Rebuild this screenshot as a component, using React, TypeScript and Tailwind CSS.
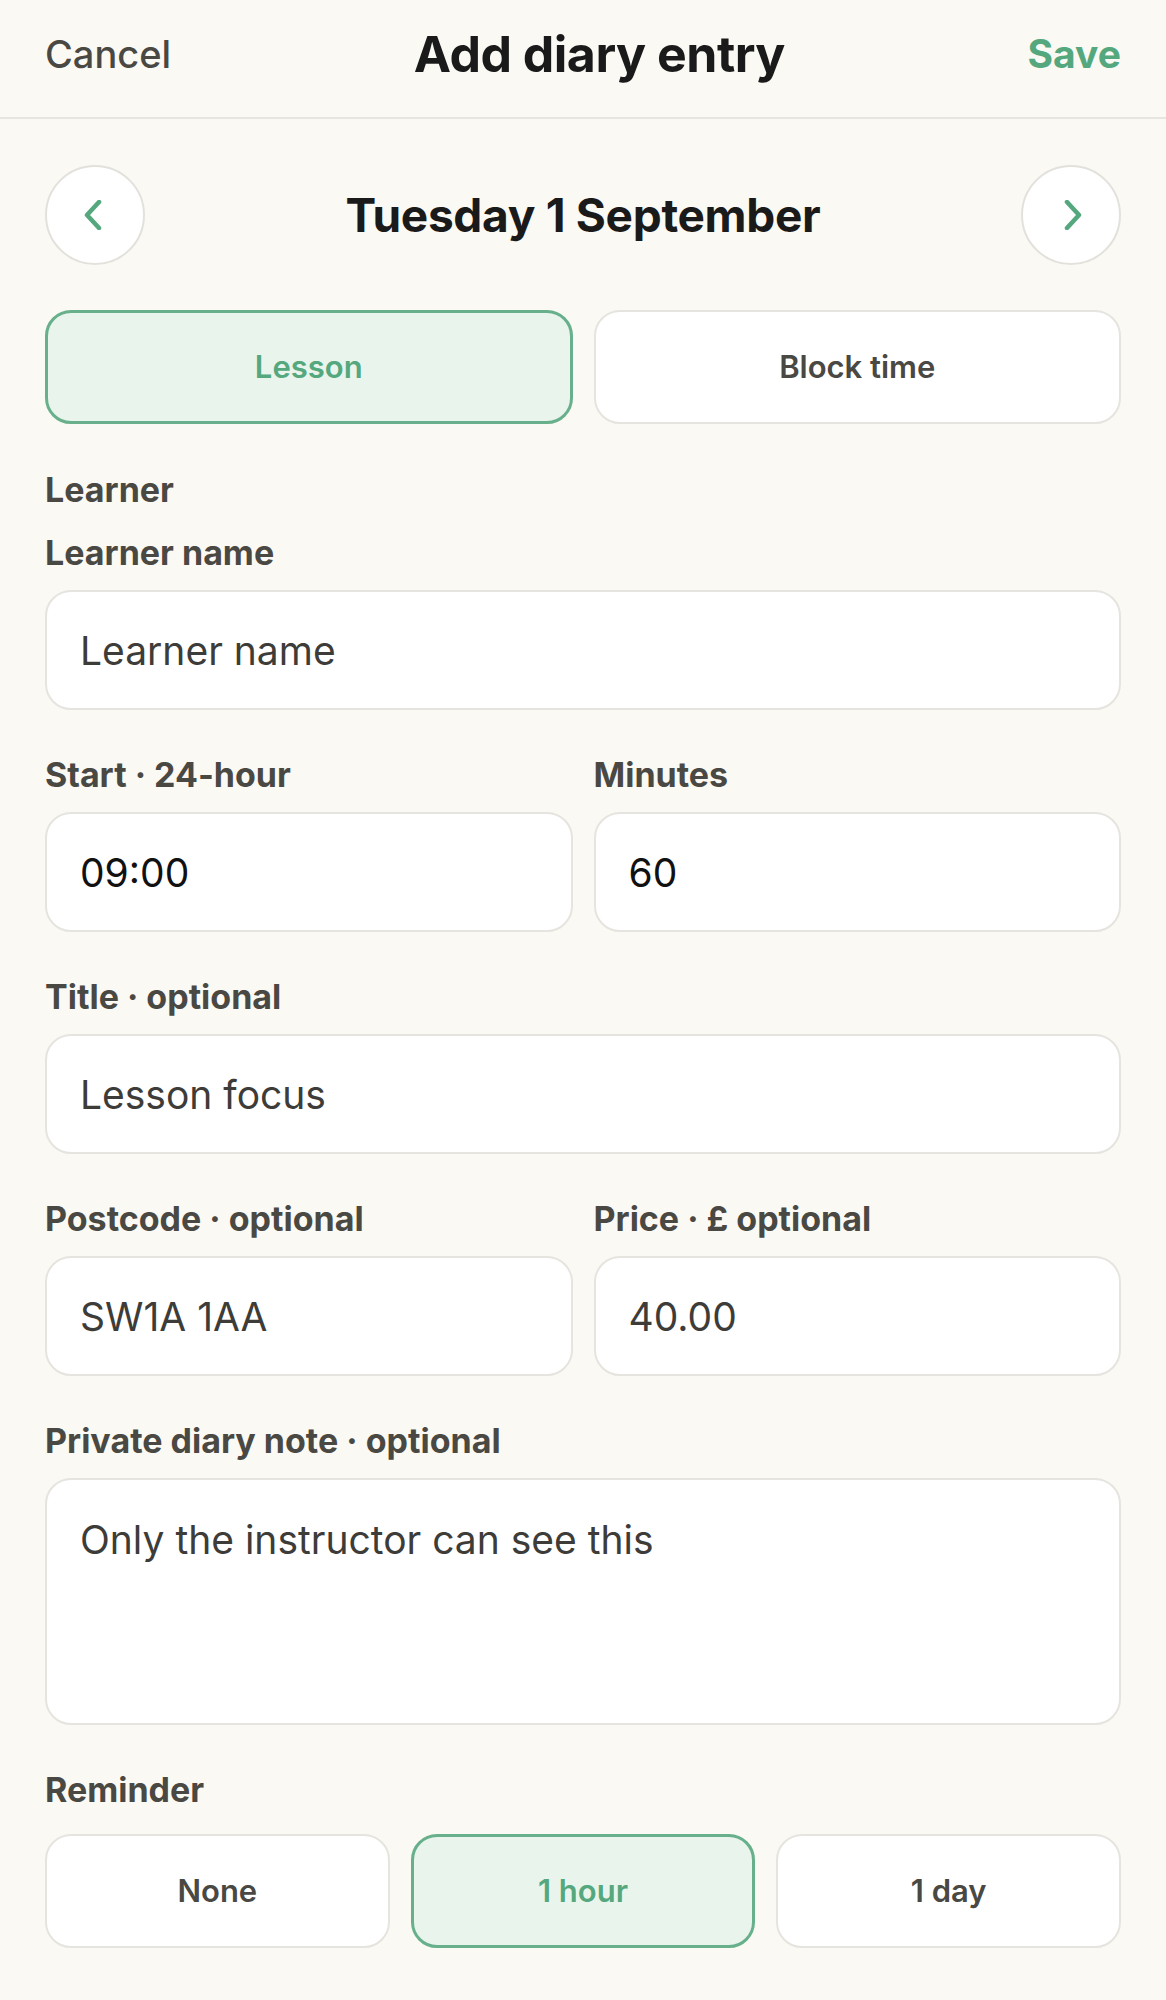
import React from 'react';

const GREEN = 'text-[#55a87e]';

function Chevron({ dir }: { dir: 'left' | 'right' }) {
  return (
    <svg width="20" height="30" viewBox="0 0 20 30" fill="none" className={GREEN}>
      <path
        d={dir === 'left' ? 'M16 2 L4 15 L16 28' : 'M4 2 L16 15 L4 28'}
        stroke="currentColor"
        strokeWidth="4.5"
        strokeLinecap="round"
        strokeLinejoin="round"
      />
    </svg>
  );
}

function Label({ children }: { children: React.ReactNode }) {
  return <div className="text-[34px] leading-[40px] font-bold text-[#4a4843]">{children}</div>;
}

function Field({ label, placeholder, value }: { label: string; placeholder?: string; value?: string }) {
  return (
    <div className="flex flex-col gap-[17px] min-w-0">
      <Label>{label}</Label>
      <input
        readOnly
        defaultValue={value}
        placeholder={placeholder}
        className="h-[120px] w-full rounded-[26px] border-2 border-[#e6e4df] bg-white px-[33px] text-[39px] text-[#111111] placeholder:text-[#3d3c39] outline-none"
      />
    </div>
  );
}

function Choice({ text, active }: { text: string; active?: boolean }) {
  return (
    <button
      className={
        active
          ? 'h-[114px] rounded-[26px] border-[3px] border-[#67b08b] bg-[#e9f4ec] text-[31px] font-semibold text-[#55a87e]'
          : 'h-[114px] rounded-[26px] border-2 border-[#e6e4df] bg-white text-[31px] font-semibold text-[#4a4843]'
      }
    >
      {text}
    </button>
  );
}

export default function App() {
  return (
    <div className="min-h-[2000px] bg-[#fbf9f4] font-['Inter',sans-serif]">
      {/* header */}
      <div className="h-[119px] border-b-2 border-[#e7e5e0] px-[45px] pb-[8px] flex items-center">
        <button className="text-[38px] font-medium text-[#4a4843]">Cancel</button>
        <h1 className="flex-1 text-center text-[50px] font-bold tracking-[-0.5px] text-[#1a1a1a]">
          Add diary entry
        </h1>
        <button className="text-[39px] font-bold text-[#55a87e]">Save</button>
      </div>

      <div className="px-[45px] pt-[46px]">
        {/* date switcher */}
        <div className="flex items-center justify-between">
          <button className="w-[100px] h-[100px] rounded-full border-2 border-[#e3e1dc] bg-white flex items-center justify-center pr-[4px]">
            <Chevron dir="left" />
          </button>
          <div className="text-[46px] font-bold tracking-[-0.3px] text-[#1a1a1a]">Tuesday 1 September</div>
          <button className="w-[100px] h-[100px] rounded-full border-2 border-[#e3e1dc] bg-white flex items-center justify-center pl-[4px]">
            <Chevron dir="right" />
          </button>
        </div>

        {/* entry type */}
        <div className="grid grid-cols-2 gap-[21px] mt-[45px]">
          <Choice text="Lesson" active />
          <Choice text="Block time" />
        </div>

        <div className="mt-[46px] flex flex-col gap-[45px]">
          <div className="flex flex-col gap-[23px]">
            <Label>Learner</Label>
            <Field label="Learner name" placeholder="Learner name" />
          </div>

          <div className="grid grid-cols-2 gap-[21px]">
            <Field label="Start · 24-hour" value="09:00" />
            <Field label="Minutes" value="60" />
          </div>

          <Field label="Title · optional" placeholder="Lesson focus" />

          <div className="grid grid-cols-2 gap-[21px]">
            <Field label="Postcode · optional" placeholder="SW1A 1AA" />
            <Field label="Price · £ optional" placeholder="40.00" />
          </div>

          <div className="flex flex-col gap-[17px]">
            <Label>Private diary note · optional</Label>
            <textarea
              readOnly
              placeholder="Only the instructor can see this"
              className="h-[247px] w-full resize-none rounded-[26px] border-2 border-[#e6e4df] bg-white px-[33px] pt-[36px] text-[39px] leading-[48px] text-[#111111] placeholder:text-[#3d3c39] outline-none"
            />
          </div>

          <div className="flex flex-col gap-[24px]">
            <Label>Reminder</Label>
            <div className="grid grid-cols-3 gap-[21px]">
              <Choice text="None" />
              <Choice text="1 hour" active />
              <Choice text="1 day" />
            </div>
          </div>
        </div>
      </div>
    </div>
  );
}
